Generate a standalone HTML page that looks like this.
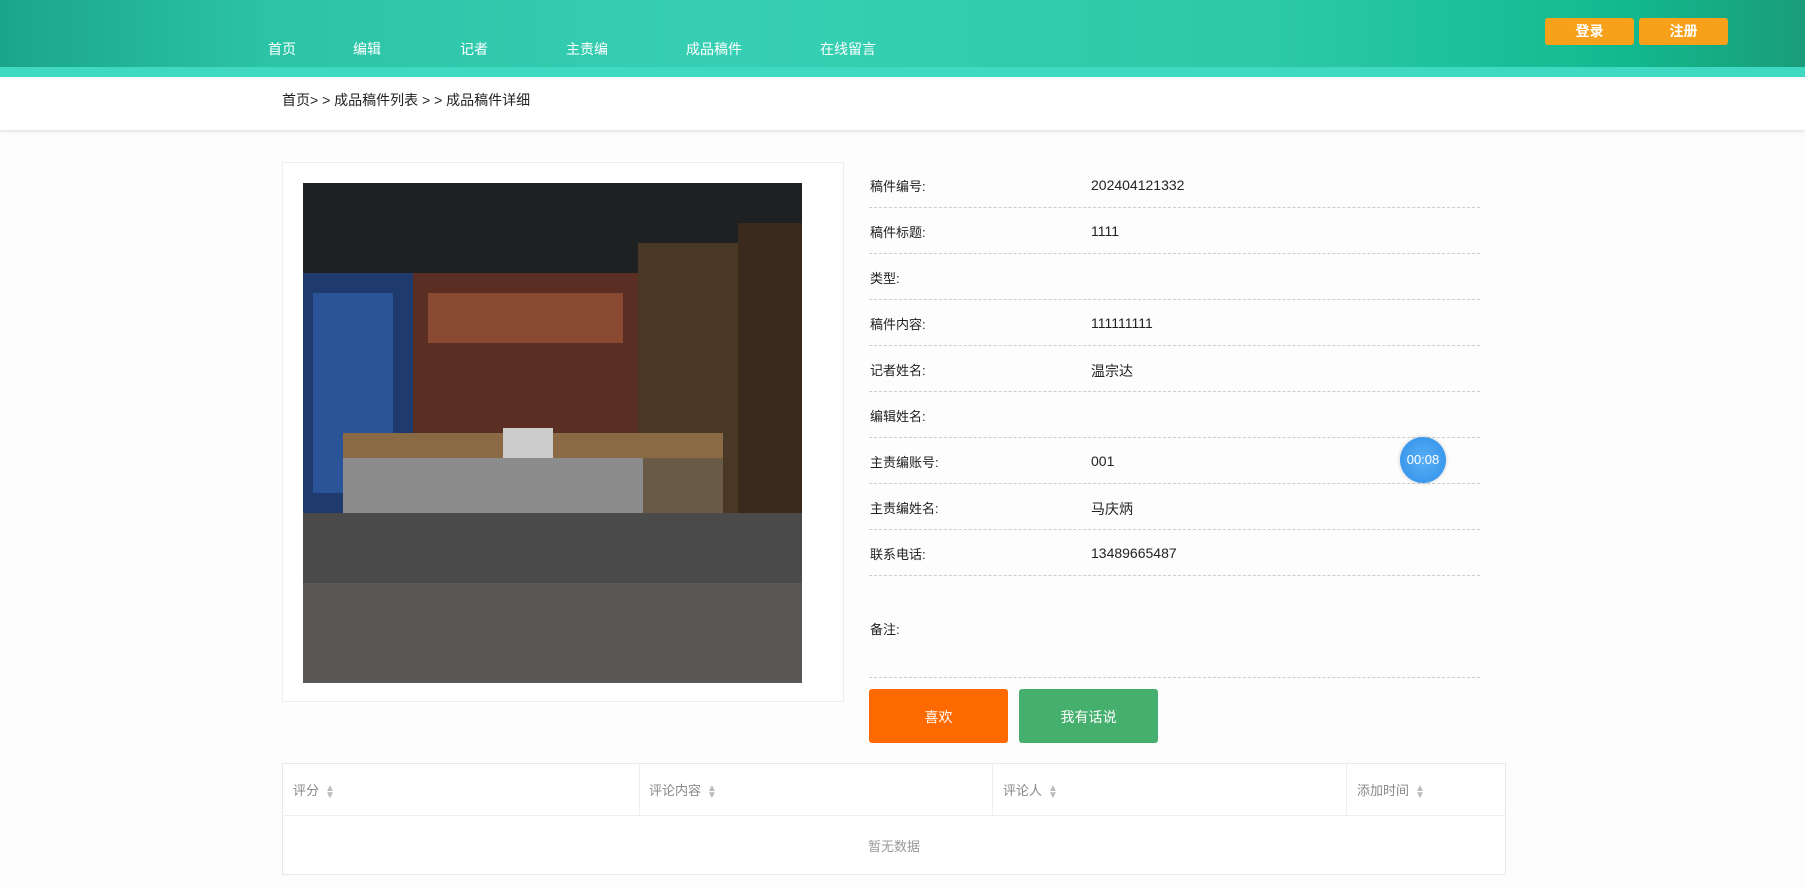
<!DOCTYPE html>
<html><head><meta charset="utf-8"><style>
*{margin:0;padding:0;box-sizing:border-box}
body{width:1805px;height:888px;overflow:hidden;background:#fdfdfd;font-family:"Liberation Sans","Noto Sans CJK SC",sans-serif;font-size:14px;color:#333;position:relative}
.hdr{position:absolute;left:0;top:0;width:1805px;height:67px;background:linear-gradient(90deg,#1aa58a 0%,#2cc4a6 15%,#36cfb4 40%,#2ccaa6 70%,#12b98f 90%,#1a9c7a 100%)}
.band{position:absolute;left:0;top:67px;width:1805px;height:10px;background:#3fd8c0}
.nav{position:absolute;top:39px;color:#fff;font-size:14px}
.btn{position:absolute;top:18px;height:27px;width:89px;background:#f7a11a;color:#fff;text-align:center;line-height:27px;font-size:14px;font-weight:bold;border-radius:3px}
.crumb{position:absolute;left:0;top:77px;width:1805px;height:53px;background:#fff;box-shadow:0 2px 3px rgba(0,0,0,.1)}
.crumb span{position:absolute;left:282px;top:13px;font-size:14px;color:#222}
.card{position:absolute;left:282px;top:162px;width:562px;height:540px;border:1px solid #eee;background:#fff}
.img{position:absolute;left:303px;top:183px;width:499px;height:500px;overflow:hidden;background:#2a2a2a}
.lbl{position:absolute;left:870px;font-size:13px;color:#222}
.val{position:absolute;left:1091px;font-size:14px;color:#222;margin-top:1px}
.line{position:absolute;left:869px;width:611px;border-top:1px dashed #ccc}
.b2{position:absolute;top:689px;height:54px;width:139px;color:#fff;text-align:center;line-height:56px;font-size:14px;border-radius:3px}
.tbl{position:absolute;left:282px;top:763px;width:1224px;height:112px;border:1px solid #e8e8e8;background:#fff}
.th{position:absolute;top:16px;font-size:13px;color:#888}
.th i{display:inline-block;margin-left:6px;color:#bbb;font-style:normal;font-size:10px;line-height:7px;vertical-align:middle}
</style></head><body>
<div class="hdr"></div><div class="band"></div>
<div class="nav" style="left:268px">首页</div>
<div class="nav" style="left:353px">编辑</div>
<div class="nav" style="left:460px">记者</div>
<div class="nav" style="left:566px">主责编</div>
<div class="nav" style="left:686px">成品稿件</div>
<div class="nav" style="left:820px">在线留言</div>
<div class="btn" style="left:1545px">登录</div>
<div class="btn" style="left:1639px">注册</div>
<div class="crumb"><span>首页&gt; &gt; 成品稿件列表 &gt; &gt; 成品稿件详细</span></div>
<div class="card"></div>
<div class="img">
<svg width="499" height="500" viewBox="0 0 499 500">
<rect width="499" height="500" fill="#2b2b2d"/>
<rect x="0" y="0" width="499" height="110" fill="#1f2022"/>
<rect x="0" y="90" width="110" height="260" fill="#1f3b6e"/>
<rect x="10" y="110" width="80" height="200" fill="#2a5398"/>
<rect x="110" y="90" width="225" height="180" fill="#5a2e22"/>
<rect x="125" y="110" width="195" height="50" fill="#8a4a32"/>
<rect x="335" y="60" width="100" height="280" fill="#4a3826"/>
<rect x="435" y="40" width="64" height="320" fill="#3a2a1e"/>
<rect x="40" y="270" width="380" height="60" fill="#6a5a48"/>
<rect x="40" y="250" width="380" height="25" fill="#8a6a44"/>
<rect x="40" y="275" width="300" height="55" fill="#8c8c8c"/>
<rect x="0" y="330" width="499" height="170" fill="#4a4a4a"/>
<rect x="0" y="400" width="499" height="100" fill="#5a5854"/>
<rect x="200" y="245" width="50" height="30" fill="#ccc"/>
</svg></div>
<div class="lbl" style="top:176px">稿件编号:</div><div class="val" style="top:176px">202404121332</div><div class="line" style="top:207px"></div>
<div class="lbl" style="top:222px">稿件标题:</div><div class="val" style="top:222px">1111</div><div class="line" style="top:253px"></div>
<div class="lbl" style="top:268px">类型:</div><div class="line" style="top:299px"></div>
<div class="lbl" style="top:314px">稿件内容:</div><div class="val" style="top:314px">111111111</div><div class="line" style="top:345px"></div>
<div class="lbl" style="top:360px">记者姓名:</div><div class="val" style="top:360px">温宗达</div><div class="line" style="top:391px"></div>
<div class="lbl" style="top:406px">编辑姓名:</div><div class="line" style="top:437px"></div>
<div class="lbl" style="top:452px">主责编账号:</div><div class="val" style="top:452px">001</div><div class="line" style="top:483px"></div>
<div class="lbl" style="top:498px">主责编姓名:</div><div class="val" style="top:498px">马庆炳</div><div class="line" style="top:529px"></div>
<div class="lbl" style="top:544px">联系电话:</div><div class="val" style="top:544px">13489665487</div><div class="line" style="top:575px"></div>
<div class="lbl" style="top:619px">备注:</div><div class="line" style="top:677px"></div>
<div style="position:absolute;left:1400px;top:437px;width:46px;height:46px;border-radius:50%;background:radial-gradient(circle,#5ab0f5,#2e8ee8);color:#fff;font-size:13px;line-height:46px;text-align:center;box-shadow:0 0 4px rgba(0,0,0,.2)">00:08</div>
<div class="b2" style="left:869px;background:#ff6a00">喜欢</div>
<div class="b2" style="left:1019px;background:#45b06e">我有话说</div>
<div class="tbl">
<div style="position:absolute;left:0;top:51px;width:100%;border-top:1px solid #eee"></div>
<div style="position:absolute;left:356px;top:0;height:51px;border-left:1px solid #eee"></div>
<div style="position:absolute;left:709px;top:0;height:51px;border-left:1px solid #eee"></div>
<div style="position:absolute;left:1063px;top:0;height:51px;border-left:1px solid #eee"></div>
<div class="th" style="left:10px">评分<i>▲<br>▼</i></div>
<div class="th" style="left:366px">评论内容<i>▲<br>▼</i></div>
<div class="th" style="left:720px">评论人<i>▲<br>▼</i></div>
<div class="th" style="left:1074px">添加时间<i>▲<br>▼</i></div>
<div style="position:absolute;left:0;width:100%;top:72px;text-align:center;color:#999;font-size:13px">暂无数据</div>
</div>
</body></html>
